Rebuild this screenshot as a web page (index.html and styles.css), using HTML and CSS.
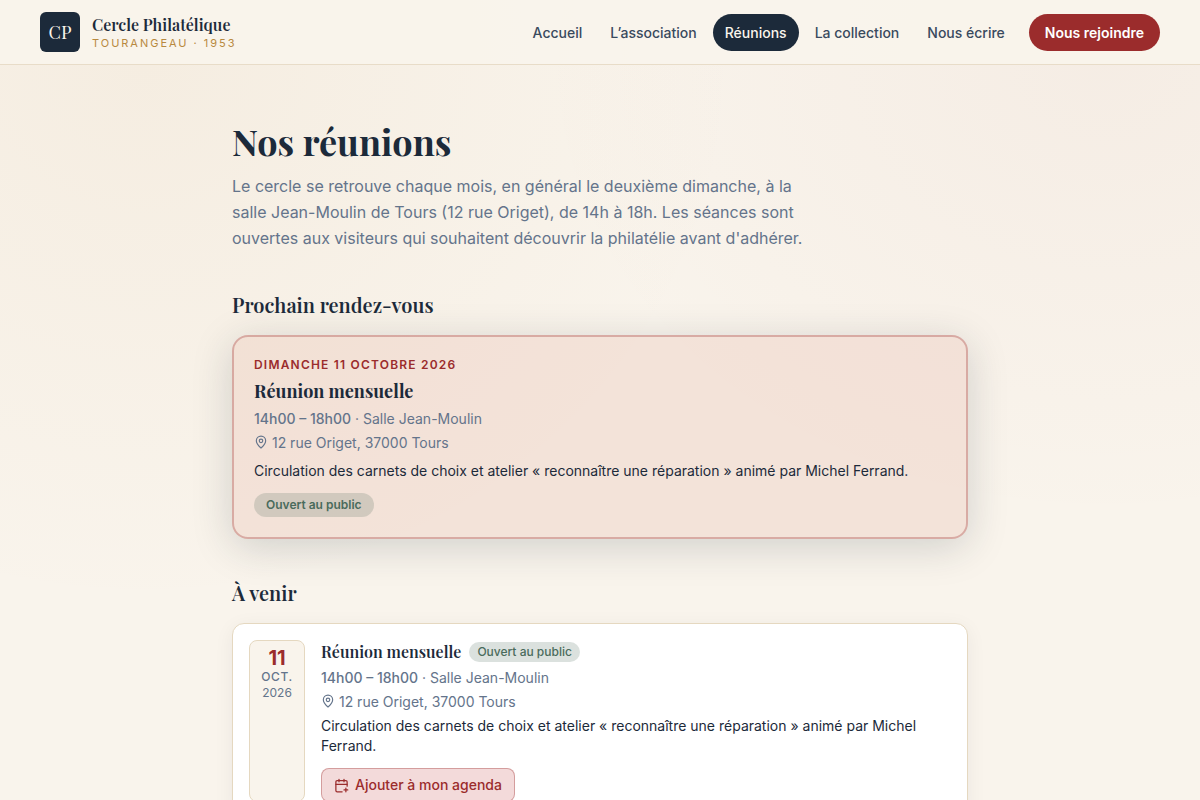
FILE: index.html
```html
<!DOCTYPE html>
<html lang="fr">
<head>
    <meta charset="UTF-8">
    <meta name="viewport" content="width=device-width, initial-scale=1.0">
    <title>Nos réunions - Cercle Philatélique Tourangeau</title>
    <link rel="stylesheet" href="styles.css">
</head>
<body>
    <header class="header">
        <a class="brand" href="#">
            <span class="logo">CP</span>
            <span class="brand-text">
                <span class="brand-name">Cercle Philatélique</span>
                <span class="brand-sub">Tourangeau · 1953</span>
            </span>
        </a>
        <nav class="nav">
            <a class="nav-link" href="#">Accueil</a>
            <a class="nav-link" href="#">L’association</a>
            <a class="nav-link active" href="#">Réunions</a>
            <a class="nav-link" href="#">La collection</a>
            <a class="nav-link" href="#">Nous écrire</a>
            <a class="nav-join" href="#">Nous rejoindre</a>
        </nav>
    </header>

    <main class="container">
        <h1>Nos réunions</h1>
        <p class="intro">Le cercle se retrouve chaque mois, en général le deuxième dimanche, à la salle Jean-Moulin de Tours (12 rue Origet), de 14h à 18h. Les séances sont ouvertes aux visiteurs qui souhaitent découvrir la philatélie avant d'adhérer.</p>

        <section class="section">
            <h2>Prochain rendez-vous</h2>
            <article class="next">
                <p class="next-date">Dimanche 11 octobre 2026</p>
                <h3 class="next-title">Réunion mensuelle</h3>
                <p class="meta"><strong>14h00 – 18h00</strong> · Salle Jean-Moulin</p>
                <p class="meta">
                    <svg class="icon-pin" viewBox="0 0 24 24" aria-hidden="true">
                        <path d="M20 10c0 4.993-5.539 10.193-7.399 11.799a1 1 0 0 1-1.202 0C9.539 20.193 4 14.993 4 10a8 8 0 0 1 16 0"/>
                        <circle cx="12" cy="10" r="3"/>
                    </svg>
                    12 rue Origet, 37000 Tours
                </p>
                <p class="next-desc">Circulation des carnets de choix et atelier « reconnaître une réparation » animé par Michel Ferrand.</p>
                <span class="badge badge-large">Ouvert au public</span>
            </article>
        </section>

        <section class="section">
            <h2>À venir</h2>
            <article class="event">
                <div class="date">
                    <span class="day">11</span>
                    <span class="month">oct.</span>
                    <span class="year">2026</span>
                </div>
                <div class="event-body">
                    <div class="event-head">
                        <h3 class="event-title">Réunion mensuelle</h3>
                        <span class="badge">Ouvert au public</span>
                    </div>
                    <p class="meta"><strong>14h00 – 18h00</strong> · Salle Jean-Moulin</p>
                    <p class="meta">
                        <svg class="icon-pin" viewBox="0 0 24 24" aria-hidden="true">
                            <path d="M20 10c0 4.993-5.539 10.193-7.399 11.799a1 1 0 0 1-1.202 0C9.539 20.193 4 14.993 4 10a8 8 0 0 1 16 0"/>
                            <circle cx="12" cy="10" r="3"/>
                        </svg>
                        12 rue Origet, 37000 Tours
                    </p>
                    <p class="event-desc">Circulation des carnets de choix et atelier « reconnaître une réparation » animé par Michel Ferrand.</p>
                    <button class="agenda" type="button">
                        <svg class="icon-calendar" viewBox="0 0 24 24" aria-hidden="true">
                            <path d="M8 2v4M16 2v4M3 10h18M16 19h6M19 16v6"/>
                            <path d="M21 13V6a2 2 0 0 0-2-2H5a2 2 0 0 0-2 2v14a2 2 0 0 0 2 2h8"/>
                        </svg>
                        Ajouter à mon agenda
                    </button>
                </div>
            </article>
        </section>
    </main>
</body>
</html>
```
FILE: styles.css
```css
* {
    box-sizing: border-box;
}
body {
    margin: 0;
    min-height: 100vh;
    font-family: Inter, sans-serif;
    font-size: 16px;
    line-height: 26px;
    color: #1c2a3a;
    background:
        radial-gradient(50% 68% at 12% 8%, rgba(184, 125, 47, 0.06), transparent),
        radial-gradient(48% 58% at 92% 8%, rgba(155, 60, 44, 0.04), transparent),
        #f9f4ec;
    background-attachment: fixed;
}
h1, h2, h3, p {
    margin: 0;
}
h1, h2, h3, .logo, .brand-name {
    font-family: "Playfair Display", "Liberation Serif", serif;
}
a {
    text-decoration: none;
}

/* Header */
.header {
    display: flex;
    justify-content: space-between;
    align-items: center;
    padding: 12px 40px;
    background: rgba(249, 244, 236, 0.92);
    border-bottom: 1px solid #e8dcc8;
}
.brand {
    display: flex;
    align-items: center;
    gap: 12px;
}
.logo {
    display: flex;
    align-items: center;
    justify-content: center;
    width: 40px;
    height: 40px;
    border-radius: 6px;
    background: #1c2a3a;
    color: #faf5ec;
    font-size: 18px;
}
.brand-text {
    display: flex;
    flex-direction: column;
}
.brand-name {
    font-size: 16px;
    font-weight: 600;
    line-height: 22px;
    color: #1c2a3a;
}
.brand-sub {
    font-size: 11px;
    line-height: 14px;
    letter-spacing: 0.18em;
    text-transform: uppercase;
    color: #b8893f;
}
.nav {
    display: flex;
    align-items: center;
    gap: 4px;
    font-size: 14px;
    font-weight: 500;
    line-height: 21px;
}
.nav-link {
    padding: 8px 12px;
    border-radius: 999px;
    color: #3a4a5e;
}
.nav-link.active {
    background: #1c2a3a;
    color: #faf5ec;
}
.nav-join {
    margin-left: 8px;
    padding: 8px 16px;
    border-radius: 999px;
    background: #9b2c2c;
    color: #fff;
    font-weight: 600;
}

/* Page */
.container {
    max-width: 784px;
    margin: 0 auto;
    padding: 48px 24px;
}
h1 {
    margin-bottom: 4px;
    font-size: 36px;
    font-weight: 700;
    line-height: 56px;
}
.intro {
    max-width: 576px;
    color: #64748b;
}
.section {
    margin-top: 40px;
}
h2 {
    margin-bottom: 16px;
    font-size: 20px;
    font-weight: 600;
    line-height: 28px;
}
.meta {
    font-size: 14px;
    line-height: 24px;
    color: #64748b;
}
.meta strong {
    font-weight: 500;
}
.icon-pin, .icon-calendar {
    width: 14px;
    height: 14px;
    fill: none;
    stroke: currentColor;
    stroke-width: 2;
    stroke-linecap: round;
    stroke-linejoin: round;
}
.icon-pin {
    vertical-align: -1px;
}
.icon-calendar {
    width: 15px;
    height: 15px;
}
.badge {
    display: inline-block;
    padding: 0 8px;
    border-radius: 999px;
    background: rgba(74, 107, 92, 0.2);
    color: #4a6b5c;
    font-size: 12px;
    font-weight: 500;
    line-height: 20px;
}

/* Next meeting */
.next {
    padding: 18px 20px 20px;
    border: 2px solid rgba(155, 44, 44, 0.3);
    border-radius: 16px;
    background: rgba(215, 125, 105, 0.14);
    box-shadow: 0 8px 40px rgba(30, 42, 58, 0.18);
}
.next-date {
    font-size: 12px;
    font-weight: 600;
    line-height: 20px;
    letter-spacing: 0.1em;
    text-transform: uppercase;
    color: #9b2c2c;
}
.next-title {
    font-size: 18px;
    font-weight: 700;
    line-height: 32px;
}
.next-desc {
    margin: 4px 0 10px;
    font-size: 14px;
    line-height: 24px;
}
.badge-large {
    display: block;
    width: fit-content;
    padding: 2px 12px;
    font-weight: 600;
}

/* Upcoming meetings */
.event {
    display: flex;
    gap: 16px;
    padding: 16px;
    border: 1px solid #e5d8c0;
    border-radius: 12px;
    background: #fff;
    box-shadow: 0 4px 20px rgba(30, 42, 58, 0.06);
}
.date {
    display: flex;
    flex-direction: column;
    align-items: center;
    flex-shrink: 0;
    width: 56px;
    padding: 6px 0;
    border: 1px solid #e5d8c0;
    border-radius: 8px;
    background: #f9f4ec;
    color: #64748b;
    font-size: 12px;
    line-height: 16px;
}
.day {
    color: #9b2c2c;
    font-size: 20px;
    font-weight: 700;
    line-height: 22px;
}
.month {
    font-weight: 500;
    letter-spacing: 0.05em;
    text-transform: uppercase;
}
.event-head {
    display: flex;
    align-items: center;
    gap: 8px;
    margin-bottom: 2px;
}
.event-title {
    font-size: 16px;
    font-weight: 600;
    line-height: 24px;
}
.event-desc {
    margin-top: 2px;
    font-size: 14px;
    line-height: 20px;
}
.agenda {
    display: flex;
    align-items: center;
    gap: 6px;
    margin-top: 12px;
    padding: 6px 12px;
    border: 1px solid rgba(155, 44, 44, 0.35);
    border-radius: 8px;
    background: #f3dada;
    color: #9b2c2c;
    font: 500 14px/20px Inter, sans-serif;
    cursor: pointer;
}
```
